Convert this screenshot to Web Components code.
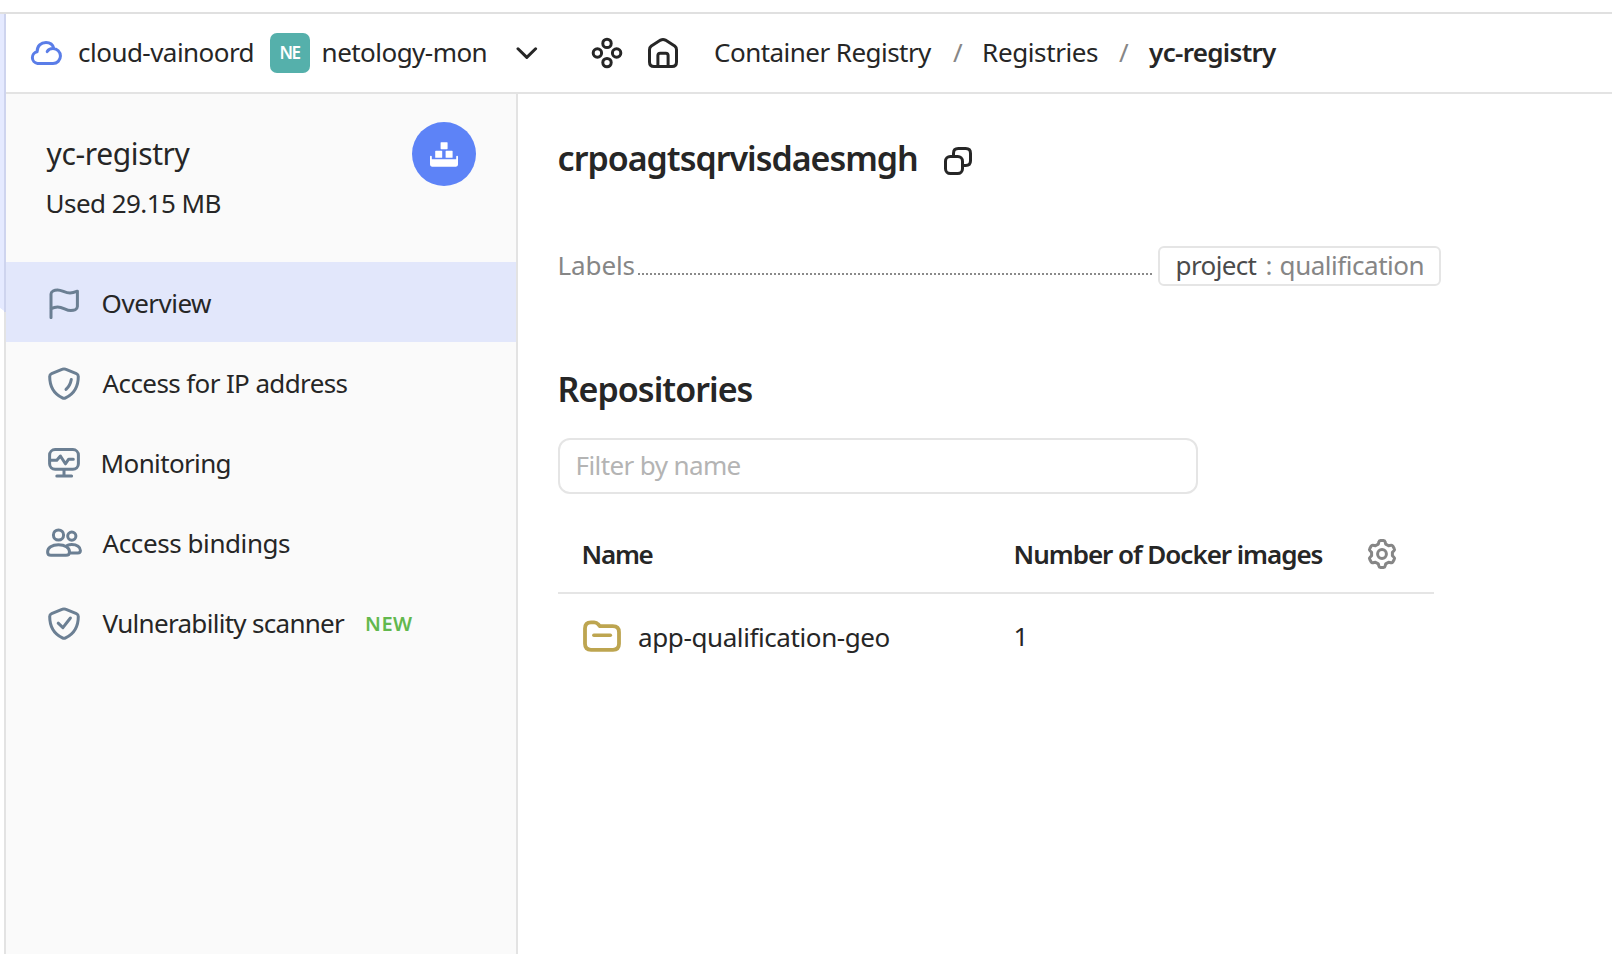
<!DOCTYPE html>
<html lang="en">
<head>
<meta charset="utf-8">
<title>yc-registry</title>
<style>
html, body { margin: 0; height: 100%; }
body { font-family: "Noto Sans", "Open Sans", sans-serif; font-size: 26px; color: #262626; background: #fff; overflow: hidden; }
</style>
</head>
<body>
<registry-app></registry-app>
<script>
const define = (name, html, ready) => {
  const tpl = document.createElement('template');
  tpl.innerHTML = html;
  customElements.define(name, class extends HTMLElement {
    connectedCallback() {
      if (this.shadowRoot) return;
      this.attachShadow({ mode: 'open' }).append(tpl.content.cloneNode(true));
      if (ready) ready(this, this.shadowRoot);
    }
  });
};

/* A label whose tracking is adjusted so that its ink is exactly `ink` px wide. */
const ruler = document.createElement('canvas').getContext('2d');
define('ui-text', `
  <style>
    :host { display: block; flex: none; white-space: nowrap; line-height: 40px; }
    span { display: block; white-space: pre; }
  </style><span><slot></slot></span>`, (el, root) => {
  const cs = getComputedStyle(el);
  const text = el.textContent;
  const ink = +el.getAttribute('ink');
  ruler.font = cs.fontWeight + ' ' + cs.fontSize + ' ' + cs.fontFamily;
  const m = ruler.measureText(text);
  const gap = text.length > 1 ? (ink - m.actualBoundingBoxRight - m.actualBoundingBoxLeft) / (text.length - 1) : 0;
  el.style.width = ink + 'px';
  const s = root.querySelector('span');
  s.style.letterSpacing = gap.toFixed(3) + 'px';
  s.style.marginLeft = (m.actualBoundingBoxLeft + .6).toFixed(2) + 'px';
});

const shield = '<path d="M14.6 2.2Q16 1.6 17.4 2.2L28.4 6.6Q30.3 7.4 30.3 9.4C30.3 19 26.4 26.6 17.6 30.8Q16 31.6 14.4 30.8C5.6 26.6 1.7 19 1.7 9.4Q1.7 7.4 3.6 6.6Z"/>';
const ICONS = {
  cloud: [32, 32, '<path d="M17.2 14.6C18.4 12.5 20.4 11.6 23 11.6a7.45 7.45 0 0 1 0 14.9H7.5A6 6 0 0 1 7.1 14.7C7.1 8.9 11 5.5 16 5.5C20 5.5 23 8 23.9 11.6"/>'],
  chevron: [22, 14, '<path d="M2 2.8 10.8 11.4 19.6 2.8"/>'],
  apps: [32, 32, '<circle cx="16" cy="6.4" r="4.2"/><circle cx="6.4" cy="16" r="4.2"/><circle cx="25.6" cy="16" r="4.2"/><circle cx="16" cy="25.6" r="4.2"/>'],
  home: [32, 32, '<path d="M2.5 12.7Q2.5 10.4 4.3 9L13.6 3.1Q16 1.7 18.4 3.1L27.7 9Q29.5 10.4 29.5 12.7V25Q29.5 29.5 25 29.5H7Q2.5 29.5 2.5 25ZM10.9 29V18.5Q10.9 16.2 13.2 16.2H18.8Q21.1 16.2 21.1 18.5V29"/>'],
  flag: [32, 32, '<path d="M3 30.6V7C3 4.3 6.2 2.9 9.6 2.9C14 2.9 17 6.1 22 6.1C24.8 6.1 27 5.2 29.4 4.2V19.6C29.4 22.3 26 23.6 22.8 23.6C18 23.6 15 19.9 9.6 19.9C7 19.9 4.8 20.8 3 21.8"/>'],
  shield: [32, 33, shield + '<path d="M23.3 12.4C22.6 16.4 20.8 19.8 18 22.4"/>'],
  check: [32, 33, shield + '<path d="M10.2 16.2 14.9 20.7 22.4 11"/>'],
  monitor: [32, 32, '<rect x="1.6" y="2.6" width="28.8" height="19.7" rx="5.5"/><path d="M2 13.3H8.8L12.4 9 17.4 16.8 20.7 12.2H25.3M16 23V29M8.8 29H23.6"/>'],
  people: [36, 32, '<circle cx="12.5" cy="8" r="5.1"/><circle cx="25.8" cy="9.1" r="4.1"/><path d="M12.5 17.8C6 17.8 1.6 20.9 1.6 24.9Q1.6 28.3 5 28.3H20Q23.5 28.3 23.5 24.9C23.5 20.9 19 17.8 12.5 17.8ZM21.3 18.4C22.8 17.8 24 17.6 25.8 17.6C31 17.6 34.4 20.3 34.4 23.4Q34.4 25.9 31.9 25.9H24"/>'],
  copy: [28, 28, '<rect x="1.5" y="9.5" width="17" height="17" rx="4.8"/><path d="M9.5 9V6.4Q9.5 1.6 14.3 1.6H21.7Q26.5 1.6 26.5 6.4V13.7Q26.5 18.4 21.7 18.4H19"/>'],
  gear: [32, 32, '<circle cx="16" cy="16" r="4.4"/><path d="M12.9 3.9Q13.1 2.6 14.4 2.6H17.6Q18.9 2.6 19.1 3.9L19.7 6.1 22.6 7.8 24.9 7.3Q26.1 6.9 26.8 8L28.3 10.7Q29 11.8 28 12.7L26.4 14.3V17.7L28 19.3Q29 20.2 28.3 21.3L26.8 24Q26.1 25.1 24.9 24.7L22.6 24.2 19.7 25.9 19.1 28.1Q18.9 29.4 17.6 29.4H14.4Q13.1 29.4 12.9 28.1L12.3 25.9 9.4 24.2 7.1 24.7Q5.9 25.1 5.2 24L3.7 21.3Q3 20.2 4 19.3L5.6 17.7V14.3L4 12.7Q3 11.8 3.7 10.7L5.2 8Q5.9 6.9 7.1 7.3L9.4 7.8 12.3 6.1Z"/>'],
  folder: [38, 32, '<path stroke-width="3.8" d="M2 8.5Q2 2.3 8 2.3H11.2Q13.6 2.3 15 4.1L16.9 6.2H29.8Q36 6.2 36 12.2V23.8Q36 29.8 30 29.8H8Q2 29.8 2 23.8Z"/><path stroke-width="3.4" d="M10.8 15.3H27.4"/>'],
  boxes: [28, 26, '<g fill="currentColor" stroke="none"><rect x="10.6" y="1.2" width="7" height="7" rx=".6"/><rect x="5.2" y="9.8" width="7" height="7" rx=".6"/><rect x="15.6" y="9.8" width="7" height="7" rx=".6"/><path d="M0 15.6Q0 14.8 .9 14.8T1.8 15.6V18.3H26.2V15.6Q26.2 14.8 27.1 14.8T28 15.6V23.6Q28 25.7 26 25.7H2Q0 25.7 0 23.6Z"/></g>']
};
define('ui-icon', `<style>:host { display: block; flex: none; } svg { display: block; fill: none; stroke: currentColor; stroke-width: 3; stroke-linecap: round; stroke-linejoin: round; }</style><div></div>`, (el, root) => {
  const [w, h, d] = ICONS[el.getAttribute('name')];
  root.querySelector('div').innerHTML = `<svg width="${w}" height="${h}" viewBox="0 0 ${w} ${h}">${d}</svg>`;
});

define('top-bar', `
  <style>
    :host { display: flex; align-items: center; height: 78px; padding-left: 23.5px; border-bottom: 2px solid #e3e3e3; background: #fff; }
    ui-text { padding-bottom: 2px; }
    .cloud { color: #5a7de8; margin: -1px 17px 0 0; }
    .badge { display: flex; align-items: center; justify-content: center; width: 40px; height: 40px; margin: 0 13px 0 18px; border-radius: 7px; background: #55b0ab; color: #fff; font-size: 17px; font-weight: 600; }
    .badge ui-text { padding: 0; }
    .chev { margin: 0 53px 0 31px; }
    .home { margin: 0 35.5px 0 24px; }
    .cur { font-weight: 600; margin-left: -1px; }
    .sl { color: #868686; margin: 0 21px; }
  </style>
  <ui-icon class="cloud" name="cloud"></ui-icon>
  <ui-text ink="173.5">cloud-vainoord</ui-text>
  <div class="badge"><ui-text ink="20">NE</ui-text></div>
  <ui-text ink="162">netology-mon</ui-text>
  <ui-icon class="chev" name="chevron"></ui-icon>
  <ui-icon name="apps"></ui-icon>
  <ui-icon class="home" name="home"></ui-icon>
  <ui-text ink="217">Container Registry</ui-text>
  <ui-text class="sl" ink="10">/</ui-text>
  <ui-text ink="114">Registries</ui-text>
  <ui-text class="sl" ink="10">/</ui-text>
  <ui-text class="cur" ink="128">yc-registry</ui-text>`);

define('nav-item', `
  <style>
    :host { display: flex; align-items: center; height: 80px; padding-left: 40px; }
    :host([active]) { background: #e2e7fb; }
    .ic { width: 36px; display: flex; justify-content: center; color: #6b7f93; margin-right: 20px; padding-top: 2px; }
    ::slotted(ui-text) { padding-top: 1px; }
  </style>
  <div class="ic"><slot name="icon"></slot></div><slot></slot>`);

define('side-bar', `
  <style>
    :host { display: block; box-sizing: border-box; width: 512px; background: #fafafa; border-right: 2px solid #e3e3e3; }
    header { display: flex; justify-content: space-between; height: 140px; padding: 28px 40px 0 40px; }
    .name { font-size: 30px; padding-top: 12px; }
    .used { padding: 9px 0 0 1px; }
    .logo { display: flex; align-items: center; justify-content: center; width: 64px; height: 64px; border-radius: 50%; background: #5d83f7; color: #fff; }
    .new { color: #62b84e; font-size: 20px; font-weight: 600; margin-left: 21px; padding-top: 4px !important; }
  </style>
  <header>
    <div><ui-text class="name" ink="144">yc-registry</ui-text><ui-text class="used" ink="173">Used 29.15 MB</ui-text></div>
    <div class="logo"><ui-icon name="boxes"></ui-icon></div>
  </header>
  <nav>
    <nav-item active><ui-icon slot="icon" name="flag"></ui-icon><ui-text ink="109.5">Overview</ui-text></nav-item>
    <nav-item><ui-icon slot="icon" name="shield"></ui-icon><ui-text ink="245">Access for IP address</ui-text></nav-item>
    <nav-item><ui-icon slot="icon" name="monitor"></ui-icon><ui-text ink="127">Monitoring</ui-text></nav-item>
    <nav-item><ui-icon slot="icon" name="people"></ui-icon><ui-text ink="187.5">Access bindings</ui-text></nav-item>
    <nav-item><ui-icon slot="icon" name="check"></ui-icon><ui-text ink="242.5">Vulnerability scanner</ui-text><ui-text class="new" ink="46">NEW</ui-text></nav-item>
  </nav>`);

define('label-row', `
  <style>
    :host { display: flex; width: 883px; height: 40px; margin-top: 56px; color: #868686; }
    .name { margin: -1px 0 0 1px; }
    .dots { flex: 1; height: 2px; margin: 26.5px 4px 0 4px; background: repeating-linear-gradient(90deg, #8a8a8a 0 2px, transparent 2px 4px); }
    .tag { display: flex; align-items: center; box-sizing: border-box; height: 40px; padding: 0 17px 2px 17px; border: 2px solid #e5e5e5; border-radius: 6px; }
    .key { color: #4b4b4b; }
    .colon { margin: 0 9px 0 10px; }
  </style>
  <ui-text class="name" ink="75">Labels</ui-text>
  <div class="dots"></div>
  <div class="tag"><ui-text class="key" ink="79">project</ui-text><ui-text class="colon" ink="5">:</ui-text><ui-text ink="142">qualification</ui-text></div>`);

define('repo-table', `
  <style>
    :host { display: block; width: 876px; }
    .row { display: grid; grid-template-columns: 457px 353px auto; align-items: center; justify-content: start; }
    .head { height: 76px; border-bottom: 2px solid #e5e5e5; font-weight: 600; }
    .head ui-text { padding-bottom: 1px; }
    .body { height: 83px; }
    .name { display: flex; align-items: center; gap: 17.5px; padding-left: 25px; }
    .name ui-icon { color: #bda550; }
    .gear { color: #868686; margin-left: -2px; }
  </style>
  <div class="row head">
    <div class="name"><ui-text ink="69">Name</ui-text></div>
    <ui-text ink="307">Number of Docker images</ui-text>
    <ui-icon class="gear" name="gear"></ui-icon>
  </div>
  <div class="row body">
    <div class="name"><ui-icon name="folder"></ui-icon><ui-text style="padding-top:3px" ink="250.5">app-qualification-geo</ui-text></div>
    <ui-text ink="9">1</ui-text>
  </div>`);

define('main-pane', `
  <style>
    :host { display: block; flex: 1; padding: 40px 0 0 40px; background: #fff; }
    h1, h2 { margin: 0; font-size: 34px; font-weight: 600; display: flex; align-items: center; }
    h1 { height: 52px; gap: 27px; }
    h1 ui-icon { padding-top: 2px; }
    h1 ui-text { padding-bottom: 4px; }
    h2 { height: 50px; margin-top: 78px; padding-left: 2px; }
    label-row { margin-top: 60px; }
    .input { display: flex; align-items: center; box-sizing: border-box; width: 640px; height: 56px; margin: 24px 0 22px; padding: 0 0 2px 17px; border: 2px solid #e5e5e5; border-radius: 12px; color: #b4b4b4; }
  </style>
  <h1><ui-text ink="358.5">crpoagtsqrvisdaesmgh</ui-text><ui-icon name="copy"></ui-icon></h1>
  <label-row></label-row>
  <h2><ui-text ink="192">Repositories</ui-text></h2>
  <div class="input"><ui-text ink="163">Filter by name</ui-text></div>
  <repo-table></repo-table>`);

define('registry-app', `
  <style>
    :host { display: flex; flex-direction: column; height: 100vh; box-sizing: border-box; padding-top: 12px; }
    .page { flex: 1; display: flex; border-top: 2px solid #e0e0e0; min-height: 0; }
    .edge { width: 6px; display: flex; flex-direction: column; }
    .edge i { box-sizing: border-box; border-right: 2px solid #e3e3e3; }
    .edge .tint { height: 298px; background: linear-gradient(37deg, #fff 3px, #e5eaff 3.6px); border-color: #ced4ee; }
    .edge .rest { flex: 1; }
    .content { flex: 1; display: flex; flex-direction: column; }
    .cols { flex: 1; display: flex; }
  </style>
  <div class="page">
    <div class="edge"><i class="tint"></i><i class="rest"></i></div>
    <div class="content">
      <top-bar></top-bar>
      <div class="cols"><side-bar></side-bar><main-pane></main-pane></div>
    </div>
  </div>`);
</script>
</body>
</html>
